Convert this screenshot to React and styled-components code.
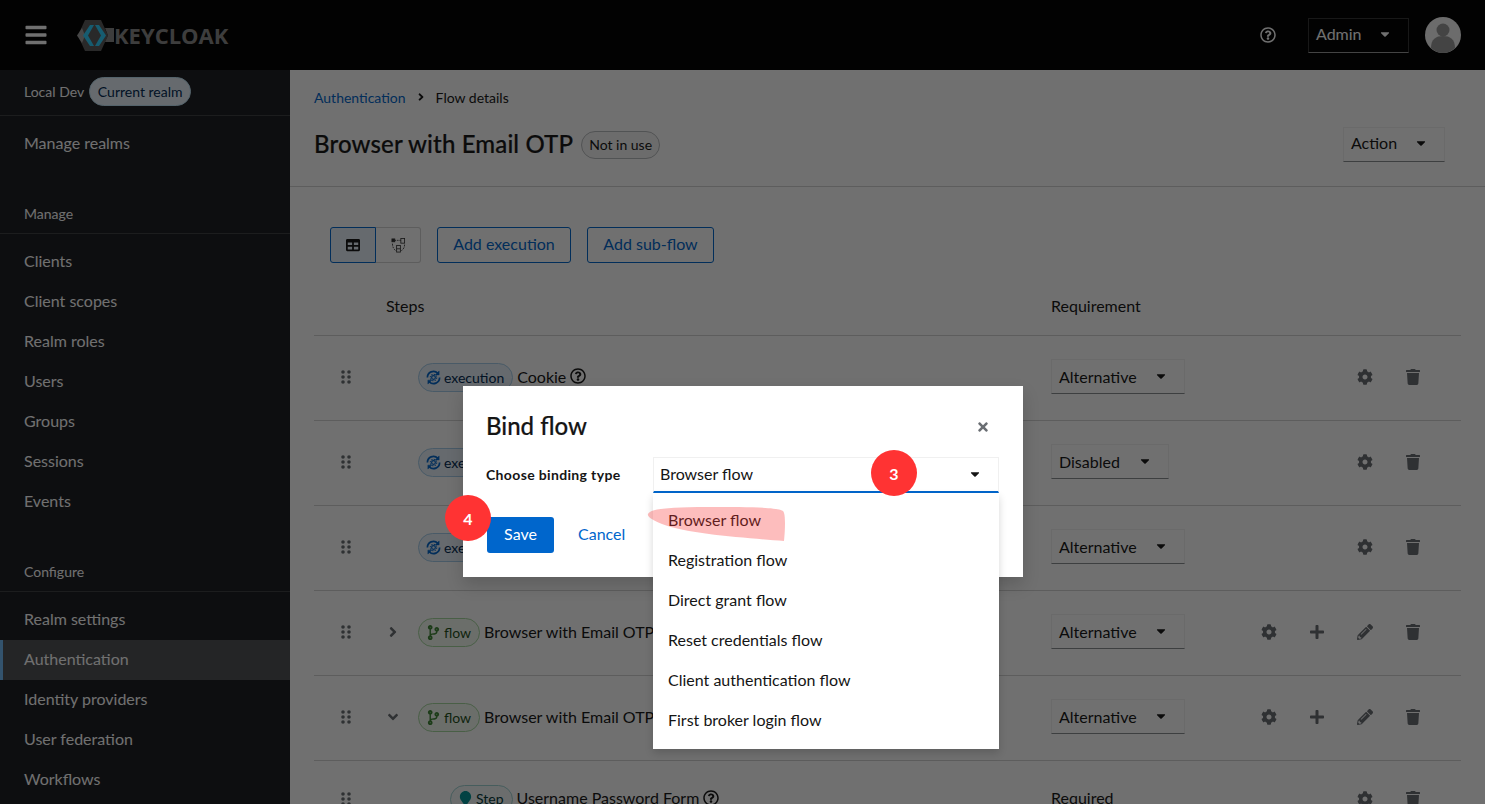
import React from "react";
import styled, { createGlobalStyle } from "styled-components";
import {
  FaBars,
  FaCaretDown,
  FaCodeBranch,
  FaCog,
  FaAngleDown,
  FaAngleRight,
  FaMapMarker,
  FaPencilAlt,
  FaPlus,
  FaRegQuestionCircle,
  FaTable,
  FaTimes,
  FaTrash,
} from "react-icons/fa";

const GlobalStyle = createGlobalStyle`
  html, body {
    margin: 0;
    height: 100%;
    overflow: hidden;
    font-family: "Lato", "Open Sans", sans-serif;
    color: #151515;
    font-size: 16px;
  }
  * {
    box-sizing: border-box;
  }
`;

const Page = styled.div`
  position: relative;
  width: 1485px;
  height: 804px;
  overflow: hidden;
  display: flex;
  flex-direction: column;
  background: #fff;
`;

/* masthead */
const Masthead = styled.header`
  height: 70px;
  flex: none;
  background: #020202;
  display: flex;
  align-items: center;
  padding: 0 24px;
  color: #fff;
`;

const Burger = styled.div`
  display: flex;
  font-size: 24px;
  margin-right: 29px;
`;

const Logo = styled.div`
  display: flex;
  align-items: center;
`;

const LogoText = styled.span`
  font-family: "Open Sans", sans-serif;
  font-weight: 700;
  font-size: 22px;
  color: #8a8a8a;
`;

const MastheadRight = styled.div`
  margin-left: auto;
  display: flex;
  align-items: center;
  margin-right: 0;
`;

const HelpButton = styled.div`
  display: flex;
  font-size: 16px;
  margin-right: 32px;
`;

const MastheadSelect = styled.div`
  width: 101px;
  height: 35px;
  display: flex;
  align-items: center;
  justify-content: space-between;
  padding: 0 16px 3px 7px;
  border: 1px solid #333;
  border-bottom-color: #999;
  font-size: 16px;
  margin-right: 16px;
`;

const Avatar = styled.svg`
  width: 36px;
  height: 36px;
  display: block;
`;

/* body */
const Body = styled.div`
  flex: 1;
  display: flex;
  min-height: 0;
`;

const Sidebar = styled.aside`
  width: 290px;
  flex: none;
  background: #1b1d21;
  color: #fff;
  display: flex;
  flex-direction: column;
`;

const RealmRow = styled.div`
  height: 46px;
  flex: none;
  display: flex;
  align-items: center;
  gap: 5px;
  padding: 0 24px 2px;
  font-size: 14px;
  border-bottom: 1px solid #3c3f42;
`;

const RealmLabel = styled.span`
  background: #e7f1fa;
  color: #002952;
  border: 1px solid #bee1f4;
  border-radius: 15px;
  height: 29px;
  width: 102px;
  display: flex;
  align-items: center;
  justify-content: center;
  font-size: 14px;
  white-space: nowrap;
`;

const NavList = styled.nav`
  display: flex;
  flex-direction: column;
  padding-top: 8px;
`;

const NavItem = styled.a`
  height: 40px;
  display: flex;
  align-items: center;
  padding: 0 24px 4px;
  font-size: 16px;
  background: ${(p) => (p.$active ? "#4f5255" : "transparent")};
  box-shadow: ${(p) => (p.$active ? "inset 3px 0 0 #73bcf7" : "none")};
`;

const NavSection = styled.div`
  height: 39px;
  margin-top: ${(p) => p.$top}px;
  display: flex;
  align-items: center;
  padding: 0 24px 2px;
  font-size: 14px;
  border-bottom: 1px solid #3c3f42;
`;

const Main = styled.main`
  flex: 1;
  min-width: 0;
  display: flex;
  flex-direction: column;
`;

const PageHead = styled.section`
  height: 117px;
  flex: none;
  padding: 17px 40px 0 24px;
  border-bottom: 1px solid #d2d2d2;
`;

const Breadcrumb = styled.div`
  display: flex;
  align-items: center;
  gap: 9px;
  height: 20px;
  font-size: 14px;
`;

const BreadLink = styled.a`
  color: #06c;
`;

const TitleRow = styled.div`
  display: flex;
  align-items: center;
  margin-top: 20px;
  height: 35px;
`;

const Title = styled.h1`
  margin: 0 0 3px;
  font-size: 24px;
  font-weight: 500;
  letter-spacing: 0.13px;
  -webkit-text-stroke: 0.2px #151515;
  white-space: nowrap;
`;

const StatusLabel = styled.span`
  margin-left: 8px;
  height: 28px;
  width: 79px;
  justify-content: center;
  display: flex;
  align-items: center;
  font-size: 14px;
  border: 1px solid #b8bbbe;
  border-radius: 14px;
  background: #f5f5f5;
  white-space: nowrap;
`;

const ActionSelect = styled.div`
  margin-left: auto;
  width: 102px;
  height: 35px;
  display: flex;
  align-items: center;
  justify-content: space-between;
  padding: 0 16px 4px 7px;
  border: 1px solid #f0f0f0;
  border-bottom-color: #8a8d90;
  font-size: 16px;
`;

const Toolbar = styled.div`
  display: flex;
  align-items: center;
  gap: 16px;
  height: 36px;
  margin: 40px 0 0 40px;
`;

const ToggleGroup = styled.div`
  display: flex;
  height: 36px;
`;

const ToggleButton = styled.div`
  width: ${(p) => (p.$selected ? 46 : 45)}px;
  display: flex;
  align-items: center;
  justify-content: center;
  font-size: 14px;
  border: 1px solid ${(p) => (p.$selected ? "#06c" : "#d2d2d2")};
  border-left-width: ${(p) => (p.$selected ? 1 : 0)}px;
  border-radius: ${(p) => (p.$selected ? "3px 0 0 3px" : "0 3px 3px 0")};
  background: ${(p) => (p.$selected ? "#e7f1fa" : "#fff")};
`;

const OutlineButton = styled.a`
  height: 36px;
  width: ${(p) => p.$width}px;
  padding-bottom: 4px;
  display: flex;
  align-items: center;
  justify-content: center;
  font-size: 16px;
  color: #06c;
  border: 1px solid #06c;
  border-radius: 3px;
  white-space: nowrap;
`;

const Table = styled.div`
  margin: 18px 24px 0;
`;

const Columns = "64px 30px 643px 1fr auto";

const HeadRow = styled.div`
  display: grid;
  grid-template-columns: ${Columns};
  align-items: center;
  height: 55px;
  padding-bottom: 6px;
  border-bottom: 1px solid #d2d2d2;
  font-size: 16px;
`;

const StepsHead = styled.div`
  grid-column: 2 / 4;
  padding-left: 8px;
`;

const RowBox = styled.div`
  display: grid;
  grid-template-columns: ${Columns};
  align-items: center;
  height: ${(p) => p.$height}px;
  padding-bottom: 4px;
  border-bottom: 1px solid #d2d2d2;
`;

const Grip = styled.div`
  display: flex;
  justify-content: center;
  padding-top: 2px;
  color: #6a6e73;
`;

const Toggle = styled.div`
  display: flex;
  justify-content: center;
  padding-top: 2px;
  color: #6a6e73;
  font-size: 16px;
`;

const StepCell = styled.div`
  display: flex;
  align-items: center;
  gap: 4px;
  padding-left: ${(p) => 10 + p.$depth * 32}px;
  white-space: nowrap;
  overflow: hidden;
`;

const kinds = {
  execution: { bg: "#e7f1fa", border: "#a5cdea", color: "#002952", icon: "#06c" },
  flow: { bg: "#f3faf2", border: "#a6d79f", color: "#1e4f18", icon: "#3e8635" },
  Step: { bg: "#f3f9f9", border: "#9fd3d3", color: "#003737", icon: "#009596" },
};

const KindLabel = styled.span`
  display: inline-flex;
  align-items: center;
  gap: 3px;
  height: 29px;
  margin-top: 3px;
  padding: 0 8px 1px 7px;
  font-size: 14px;
  border-radius: 15px;
  border: 1px solid ${(p) => kinds[p.$kind].border};
  background: ${(p) => kinds[p.$kind].bg};
  color: ${(p) => kinds[p.$kind].color};

  svg {
    color: ${(p) => kinds[p.$kind].icon};
  }
`;

const HelpMark = styled.span`
  display: inline-flex;
  font-size: 16px;
`;

const RequirementSelect = styled.div`
  width: ${(p) => p.$width}px;
  height: 35px;
  display: flex;
  align-items: center;
  justify-content: space-between;
  padding: 0 16px 0 7px;
  border: 1px solid #f0f0f0;
  border-bottom-color: #8a8d90;
  font-size: 16px;
`;

const Actions = styled.div`
  display: flex;
  justify-content: flex-end;
  padding: 2px 24px 0 0;
`;

const ActionIcon = styled.div`
  width: 48px;
  display: flex;
  justify-content: center;
  color: #6a6e73;
  font-size: 16px;
`;

/* overlay */
const Backdrop = styled.div`
  position: absolute;
  inset: 0;
  background: rgba(3, 3, 3, 0.57);
`;

const Modal = styled.div`
  position: absolute;
  top: 386px;
  left: 463px;
  width: 560px;
  padding: 24px 24px 24px 23px;
  background: #fff;
  box-shadow: 0 8px 16px rgba(3, 3, 3, 0.16);
`;

const ModalTitle = styled.h2`
  margin: 0 0 16px;
  font-size: 24px;
  line-height: 31px;
  font-weight: 500;
  -webkit-text-stroke: 0.2px #151515;
`;

const CloseButton = styled.div`
  position: absolute;
  top: 34px;
  right: 33px;
  display: flex;
  color: #6a6e73;
  font-size: 14px;
`;

const FormRow = styled.div`
  display: grid;
  grid-template-columns: 167px 346px;
  align-items: center;
`;

const FormLabel = styled.label`
  font-size: 14px;
  font-weight: 700;
  letter-spacing: 0.35px;
  padding-bottom: 2px;
  white-space: nowrap;
`;

const SelectWrap = styled.div`
  position: relative;
`;

const SelectBox = styled.div`
  height: 36px;
  display: flex;
  align-items: center;
  justify-content: space-between;
  padding: 0 16px 2px 6px;
  border: 1px solid #f0f0f0;
  border-bottom: 2px solid #06c;
  font-size: 16px;
`;

const Menu = styled.ul`
  position: absolute;
  top: 36px;
  left: 0;
  right: 0;
  margin: 0;
  padding: 8px 0;
  list-style: none;
  background: #fff;
  box-shadow: 0 4px 8px rgba(3, 3, 3, 0.16);
  z-index: 2;
`;

const MenuItem = styled.li`
  height: 40px;
  display: flex;
  align-items: center;
  padding: 0 15px 4px;
  font-size: 16px;
`;

const Footer = styled.div`
  display: flex;
  align-items: center;
  gap: 24px;
  margin: 24px 0 0 1px;
`;

const SaveButton = styled.a`
  height: 36px;
  width: 67px;
  padding-bottom: 4px;
  display: flex;
  align-items: center;
  justify-content: center;
  color: #fff;
  background: #06c;
  border-radius: 3px;
  font-size: 16px;
`;

const CancelLink = styled.a`
  color: #06c;
  font-size: 16px;
  margin-bottom: 4px;
`;

const StepBadge = styled.div`
  position: absolute;
  left: ${(p) => p.$x}px;
  top: ${(p) => p.$y}px;
  width: 46px;
  height: 46px;
  border-radius: 50%;
  background: #ff3333;
  color: #fff;
  font-size: 16px;
  font-weight: 700;
  display: flex;
  align-items: center;
  justify-content: center;
  z-index: 3;
`;

const Highlight = styled.svg`
  position: absolute;
  left: 647px;
  top: 506px;
  width: 140px;
  height: 36px;
  z-index: 3;
  pointer-events: none;
`;

const GripIcon = () => (
  <svg width="10" height="14" viewBox="0 0 10 14" fill="currentColor">
    <circle cx="2" cy="2" r="1.800" />
    <circle cx="8" cy="2" r="1.800" />
    <circle cx="2" cy="7" r="1.800" />
    <circle cx="8" cy="7" r="1.800" />
    <circle cx="2" cy="12" r="1.800" />
    <circle cx="8" cy="12" r="1.800" />
  </svg>
);

const ExecutionIcon = () => (
  <svg width="15" height="15" viewBox="0 0 16 16" fill="none" stroke="currentColor">
    <path d="M1.500 8a6.500 6.500 0 0 1 11-4.700" strokeWidth="1.8" />
    <path d="M14.500 8a6.500 6.500 0 0 1-11 4.700" strokeWidth="1.8" />
    <path d="M14 1v4.200H9.800z" fill="currentColor" strokeWidth="0.5" />
    <path d="M2 15v-4.200h4.200z" fill="currentColor" strokeWidth="0.5" />
    <circle cx="8" cy="8" r="2" strokeWidth="1.3" />
    <circle cx="8" cy="8" r="3.400" strokeWidth="1.2" strokeDasharray="1.300 1.350" />
  </svg>
);

const TopologyIcon = () => (
  <svg width="15" height="15" viewBox="0 0 16 16" fill="none" stroke="#333" strokeWidth="0.9">
    <rect x="1" y="1" width="3" height="3" fill="#333" />
    <rect x="10.500" y="0.500" width="4" height="5" />
    <path d="M4 2.500h6.500" strokeDasharray="1.500 1" />
    <path d="M1.500 6c0 4 2 6.500 3.500 7.500" strokeDasharray="2 1" />
    <path d="M14.500 7c0 3-1.500 5.500-3.500 6.500" strokeDasharray="2 1" />
    <rect x="6" y="8" width="4" height="7" />
    <path d="M6 11.500h4" />
  </svg>
);

const rows = [
  { kind: "execution", name: "Cookie", help: true, requirement: "Alternative" },
  { kind: "execution", name: "Kerberos", help: true, requirement: "Disabled" },
  { kind: "execution", name: "Identity Provider Redirector", help: true, requirement: "Alternative" },
  { kind: "flow", name: "Browser with Email OTP forms", toggle: "right", requirement: "Alternative" },
  { kind: "flow", name: "Browser with Email OTP Browser", toggle: "down", requirement: "Alternative" },
  { kind: "Step", name: "Username Password Form", help: true, depth: 1, plain: "Required", height: 78 },
];

const kindIcon = {
  execution: <ExecutionIcon />,
  flow: <FaCodeBranch size={15} />,
  Step: <FaMapMarker size={15} />,
};

const sideManage = ["Clients", "Client scopes", "Realm roles", "Users", "Groups", "Sessions", "Events"];
const sideConfigure = ["Realm settings", "Authentication", "Identity providers", "User federation", "Workflows"];
const bindings = [
  "Browser flow",
  "Registration flow",
  "Direct grant flow",
  "Reset credentials flow",
  "Client authentication flow",
  "First broker login flow",
];

function FlowRow({ row }) {
  const isFlow = row.kind === "flow";
  return (
    <RowBox $height={row.height || 85}>
      <Grip>
        <GripIcon />
      </Grip>
      <Toggle>
        {row.toggle === "right" && <FaAngleRight />}
        {row.toggle === "down" && <FaAngleDown />}
      </Toggle>
      <StepCell $depth={row.depth || 0}>
        <KindLabel $kind={row.kind}>
          {kindIcon[row.kind]}
          {row.kind}
        </KindLabel>
        {row.name}
        {row.help && (
          <HelpMark>
            <FaRegQuestionCircle />
          </HelpMark>
        )}
      </StepCell>
      <div>
        {row.plain ? (
          row.plain
        ) : (
          <RequirementSelect $width={row.requirement === "Disabled" ? 118 : 134}>
            {row.requirement}
            <FaCaretDown size={14} />
          </RequirementSelect>
        )}
      </div>
      <Actions>
        <ActionIcon>
          <FaCog />
        </ActionIcon>
        {isFlow && (
          <ActionIcon>
            <FaPlus />
          </ActionIcon>
        )}
        {isFlow && (
          <ActionIcon>
            <FaPencilAlt />
          </ActionIcon>
        )}
        <ActionIcon>
          <FaTrash />
        </ActionIcon>
      </Actions>
    </RowBox>
  );
}

export default function App() {
  return (
    <Page>
      <GlobalStyle />
      <Masthead>
        <Burger>
          <FaBars />
        </Burger>
        <Logo>
          <svg width="37" height="31" viewBox="0 0 37 31">
            <path d="M8 0h16l7 15.500L24 31H8L1 15.500z" fill="#5c5c5c" />
            <path d="M0 15.500L5 8l3 7.500L5 23z" fill="#a0a0a0" />
            <path d="M28 8h9v14h-9l3-6.500z" fill="#8a8a8a" />
            <path d="M13 5h4l-6 10.500L17 26h-4L6 15.500z" fill="#30d0ff" />
            <path d="M18 5h4l7 10.500L22 26h-4l6-10.500z" fill="#30d0ff" />
          </svg>
          <LogoText>KEYCLOAK</LogoText>
        </Logo>
        <MastheadRight>
          <HelpButton>
            <FaRegQuestionCircle />
          </HelpButton>
          <MastheadSelect>
            Admin
            <FaCaretDown size={14} />
          </MastheadSelect>
          <Avatar viewBox="0 0 36 36">
            <circle cx="18" cy="18" r="18" fill="#f5f5f5" />
            <circle cx="18" cy="13" r="6.500" fill="#9a9a9a" />
            <path d="M6 31c0-9 5-12 12-12s12 3 12 12c-3 3-7.500 5-12 5s-9-2-12-5z" fill="#9a9a9a" />
          </Avatar>
        </MastheadRight>
      </Masthead>
      <Body>
        <Sidebar>
          <RealmRow>
            Local Dev
            <RealmLabel>Current realm</RealmLabel>
          </RealmRow>
          <NavList>
            <NavItem>Manage realms</NavItem>
          </NavList>
          <NavSection $top={31}>Manage</NavSection>
          <NavList>
            {sideManage.map((item) => (
              <NavItem key={item}>{item}</NavItem>
            ))}
          </NavList>
          <NavSection $top={31}>Configure</NavSection>
          <NavList>
            {sideConfigure.map((item) => (
              <NavItem key={item} $active={item === "Authentication"}>
                {item}
              </NavItem>
            ))}
          </NavList>
        </Sidebar>
        <Main>
          <PageHead>
            <Breadcrumb>
              <BreadLink>Authentication</BreadLink>
              <FaAngleRight size={12} />
              Flow details
            </Breadcrumb>
            <TitleRow>
              <Title>Browser with Email OTP</Title>
              <StatusLabel>Not in use</StatusLabel>
              <ActionSelect>
                Action
                <FaCaretDown size={14} />
              </ActionSelect>
            </TitleRow>
          </PageHead>
          <Toolbar>
            <ToggleGroup>
              <ToggleButton $selected>
                <FaTable />
              </ToggleButton>
              <ToggleButton>
                <TopologyIcon />
              </ToggleButton>
            </ToggleGroup>
            <OutlineButton $width={134}>Add execution</OutlineButton>
            <OutlineButton $width={127}>Add sub-flow</OutlineButton>
          </Toolbar>
          <Table>
            <HeadRow>
              <span />
              <StepsHead>Steps</StepsHead>
              <div>Requirement</div>
            </HeadRow>
            {rows.map((row) => (
              <FlowRow key={row.name} row={row} />
            ))}
          </Table>
        </Main>
      </Body>
      <Backdrop />
      <Modal>
        <ModalTitle>Bind flow</ModalTitle>
        <CloseButton>
          <FaTimes />
        </CloseButton>
        <FormRow>
          <FormLabel>Choose binding type</FormLabel>
          <SelectWrap>
            <SelectBox>
              Browser flow
              <FaCaretDown size={14} />
            </SelectBox>
            <Menu>
              {bindings.map((item) => (
                <MenuItem key={item}>{item}</MenuItem>
              ))}
            </Menu>
          </SelectWrap>
        </FormRow>
        <Footer>
          <SaveButton>Save</SaveButton>
          <CancelLink>Cancel</CancelLink>
        </Footer>
      </Modal>
      <Highlight viewBox="0 0 140 36">
        <path
          d="M1 8C3 3 20 1 60 1c40 0 70 0 76 4 3 3 2 20 1 30C100 32 40 28 15 18 6 14 0 11 1 8z"
          fill="rgba(250, 50, 50, 0.32)"
        />
      </Highlight>
      <StepBadge $x={871} $y={450}>
        3
      </StepBadge>
      <StepBadge $x={445} $y={495}>
        4
      </StepBadge>
    </Page>
  );
}
